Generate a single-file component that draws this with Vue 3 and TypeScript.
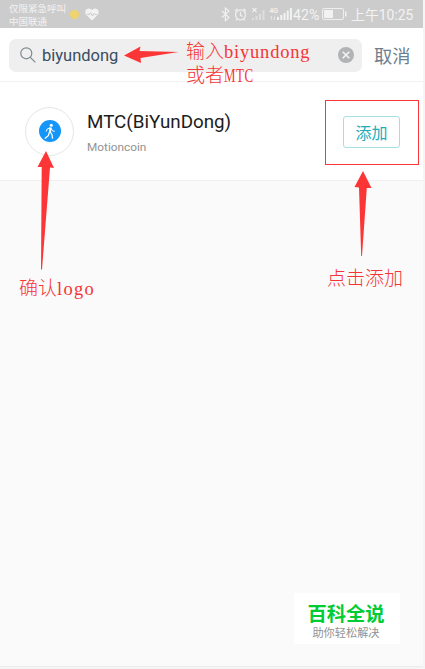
<script setup lang="ts">
import { ref } from 'vue'

interface Token {
  symbol: string
  name: string
}

const query = ref('biyundong')
const tokens: Token[] = [{ symbol: 'MTC(BiYunDong)', name: 'Motioncoin' }]
</script>

<template>
  <div class="page">
    <div class="screen">
      <header class="status">
        <div class="carrier"><span>仅限紧急呼叫</span><span>中国联通</span></div>
        <i class="dot"></i>
        <svg class="heart" width="14" height="13" viewBox="0 0 14 13">
          <path d="M7 12.4 1.2 6.8C-.6 4.700 .3 .8 3.600 .6 5.200 .5 6.300 1.300 7 2.300 7.700 1.300 8.800 .5 10.400 .6 13.700 .8 14.600 4.700 12.800 6.800Z" fill="#f2f2f2" />
          <path d="M2 6.300h2.500l1.200-1.600 1.700 3.300L9 5.500l1 1h2" fill="none" stroke="#c4c4c4" stroke-width=".9" />
        </svg>
        <svg class="indicators" width="72" height="28" viewBox="0 0 72 28">
          <g fill="none" stroke="#f0f0f0" stroke-width="1.200">
            <path d="m2 11 7 6.500-3.600 3.200V8L9 11l-7 6.500" />
            <circle cx="20.500" cy="14.800" r="5" />
            <path d="M20.500 12v3.300l2.200 1.200M14.900 11l2.700-2.400M26.100 11l-2.700-2.400M17.300 19l-1.200 1.400M23.700 19l1.200 1.400" />
            <path d="m32.500 8 4 4m0-4-4 4" />
          </g>
          <path d="M32 18h2v2h-2zM35.500 16h2v4h-2zM39 14h2v6h-2zM42.500 10h2v10h-2z" fill="#dedede" />
          <path d="M57 17h2v3h-2zM60.300 15h2v5h-2zM63.500 13h2v7h-2zM66.700 10.500h2v9.500h-2zM69.900 8h2v12h-2z" fill="#f2f2f2" />
          <path d="M51.500 20v-4m-1.300 1.300 1.300-1.300M54.500 16v4m-1.300-1.300 1.300 1.300" fill="none" stroke="#e4e4e4" stroke-width=".9" />
          <text x="49.500" y="13" class="net">4G</text>
        </svg>
        <span class="percent">42%</span>
        <svg class="battery" width="25" height="12" viewBox="0 0 25 12">
          <rect x=".5" y=".5" width="21" height="11" rx="1.500" fill="none" stroke="#eee" />
          <path d="M2 2h9v8H2zM23 3.500h1.500v5H23z" fill="#f2f2f2" />
        </svg>
        <time class="clock">上午10:25</time>
      </header>

      <div class="search">
        <div class="field">
          <svg width="16" height="16" viewBox="0 0 16 16" fill="none" stroke="#7d8a8e" stroke-width="1.200">
            <circle cx="6.300" cy="6.300" r="5.500" />
            <path d="m10.300 10.300 5 5" />
          </svg>
          <span class="query">{{ query }}</span>
          <svg class="clear" width="16" height="16" viewBox="0 0 16 16">
            <circle cx="8" cy="8" r="8" fill="#b1b3b4" />
            <path d="m4.700 4.700 6.600 6.600m0-6.600-6.600 6.600" stroke="#f4f4f4" stroke-width="1.600" />
          </svg>
        </div>
        <span class="cancel">取消</span>
      </div>

      <main class="results">
        <section v-for="token in tokens" :key="token.symbol" class="row">
          <div class="logo">
            <svg width="22" height="22" viewBox="0 0 22 22">
              <circle cx="11" cy="11" r="11" fill="#1495fa" />
              <circle cx="12.300" cy="5.300" r="1.500" fill="#fff" />
              <path d="m10.900 11.500 2 2.900.7 4.300M10.500 12 9.300 15.700 5.800 18.400" fill="none" stroke="#fff" stroke-width="1.300" />
              <path d="M11 7.800 8.200 9 7.200 11.600M12 8.200l1.500 2.600 2.300.6" fill="none" stroke="#fff" stroke-width="1" />
              <path d="m10.400 7.200 2.200.3-.6 5.100-2.100-.2z" fill="#fff" />
            </svg>
          </div>
          <div class="info">
            <span class="symbol">{{ token.symbol }}</span>
            <span class="name">{{ token.name }}</span>
          </div>
          <button class="add">添加</button>
        </section>
      </main>
    </div>

    <svg class="arrows" width="425" height="669" viewBox="0 0 425 669" fill="#fc3636">
      <path d="M124 55.500 140.500 46.500 139.500 51 178.500 52 140.500 58 141 63Z" />
      <path d="M46 151 54 168 50 167.500 42 269.500 41 269.500 41.700 167 37.500 167Z" />
      <path d="M363 171 371.500 188 366.800 188 362 256 361.200 256 359 187.500 354.500 187Z" />
    </svg>
    <div class="frame"></div>
    <p class="note note-search">输入<span>biyundong</span><br />或者<span class="caps">MTC</span></p>
    <p class="note note-logo">确认<span class="wide">logo</span></p>
    <p class="note note-add">点击添加</p>
    <div class="watermark"><strong>百科全说</strong><small>助你轻松解决</small></div>
  </div>
</template>

<style>
body {
  background: #f5f5f5;
}
</style>

<style scoped>
.page {
  position: relative;
  width: 425px;
  height: 669px;
  overflow: hidden;
  background: #f5f5f5;
  font-family: Roboto, "Noto Sans CJK SC", sans-serif;
}
.screen {
  display: flex;
  flex-direction: column;
  width: 423px;
  height: 666px;
  background: #fafafa;
  border-bottom: 1px solid #ececec;
}
.status {
  display: flex;
  align-items: center;
  box-sizing: border-box;
  height: 28px;
  padding-left: 9px;
  background: #ccc;
  color: #f3f3f3;
  white-space: nowrap;
}
.carrier {
  display: flex;
  flex-direction: column;
  width: 61px;
  padding-top: 1px;
  font-size: 9.500px;
  line-height: 13px;
}
.dot {
  width: 9px;
  height: 9px;
  border-radius: 50%;
  background: #efd36c;
}
.heart {
  margin-left: 6px;
}
.indicators {
  margin-left: 121px;
}
.net {
  fill: #f3f3f3;
  font: bold 6.500px "Liberation Sans", sans-serif;
}
.percent {
  width: 29px;
  margin-left: 1px;
  padding-top: 2px;
  font-size: 14.200px;
  line-height: 26px;
}
.battery {
  flex: none;
}
.clock {
  margin-left: 4px;
  padding-top: 2px;
  font-size: 13.900px;
  line-height: 26px;
}
.search {
  display: flex;
  align-items: center;
  box-sizing: border-box;
  height: 54px;
  padding-left: 9px;
  background: #fff;
  border-bottom: 1px solid #f1f1f1;
}
.field {
  display: flex;
  align-items: center;
  box-sizing: border-box;
  width: 353px;
  height: 33px;
  margin-top: 1px;
  padding: 0 8px 0 11px;
  background: #efefef;
  border-radius: 7px;
}
.query {
  margin-left: 6px;
  color: #384d62;
  font-size: 16.500px;
}
.clear {
  margin-left: auto;
}
.cancel {
  margin-left: 12px;
  padding-top: 1px;
  color: #6d7f8e;
  font-size: 18.300px;
}
.results {
  background: #fff;
  border-bottom: 1px solid #f0f0f0;
}
.row {
  display: flex;
  align-items: center;
  box-sizing: border-box;
  height: 98px;
  padding: 0 23px 0 25px;
}
.logo {
  display: flex;
  align-items: center;
  justify-content: center;
  box-sizing: border-box;
  width: 49px;
  height: 49px;
  border: 1px solid #e5e5e5;
  border-radius: 50%;
}
.info {
  display: flex;
  flex-direction: column;
  gap: 6px;
  margin-left: 13px;
  padding-top: 2px;
}
.symbol {
  color: #1d1d1d;
  font-size: 18.800px;
  line-height: 24px;
}
.name {
  color: #929292;
  font-size: 11.800px;
  line-height: 14px;
}
.add {
  box-sizing: border-box;
  width: 57px;
  height: 32px;
  margin-top: 2px;
  margin-left: auto;
  padding: 0 0 1px;
  border: 1px solid #a4dfe4;
  border-radius: 3px;
  background: #fff;
  color: #20adbc;
  font: 16px "Noto Sans CJK SC", sans-serif;
}
.arrows {
  position: absolute;
  left: 0;
  top: 0;
}
.frame {
  position: absolute;
  left: 325px;
  top: 100px;
  box-sizing: border-box;
  width: 94px;
  height: 65px;
  border: 1px solid #fc3636;
}
.note {
  position: absolute;
  margin: 0;
  color: #f53535;
  font: 300 19px/24px "Noto Sans CJK SC", sans-serif;
  white-space: nowrap;
}
.note span {
  display: inline-block;
  font-family: "Liberation Serif", serif;
  font-size: 18.500px;
  line-height: 20px;
  letter-spacing: 0.8px;
}
.note .caps {
  transform: scaleX(0.7);
  transform-origin: left;
}
.note .wide {
  letter-spacing: 1.300px;
}
.note-search {
  left: 186px;
  top: 38px;
}
.note-logo {
  left: 19px;
  top: 275px;
}
.note-add {
  left: 327px;
  top: 265px;
}
.watermark {
  position: absolute;
  left: 294px;
  top: 593px;
  display: flex;
  flex-direction: column;
  align-items: center;
  box-sizing: border-box;
  width: 106px;
  height: 51px;
  padding: 9px 2px 0 0;
  background: #fff;
  font-family: "Noto Sans CJK SC", sans-serif;
}
.watermark strong {
  color: #0c3;
  font-size: 19.300px;
  line-height: 23px;
}
.watermark small {
  color: #929292;
  font-size: 11.200px;
  line-height: 14px;
}
</style>
